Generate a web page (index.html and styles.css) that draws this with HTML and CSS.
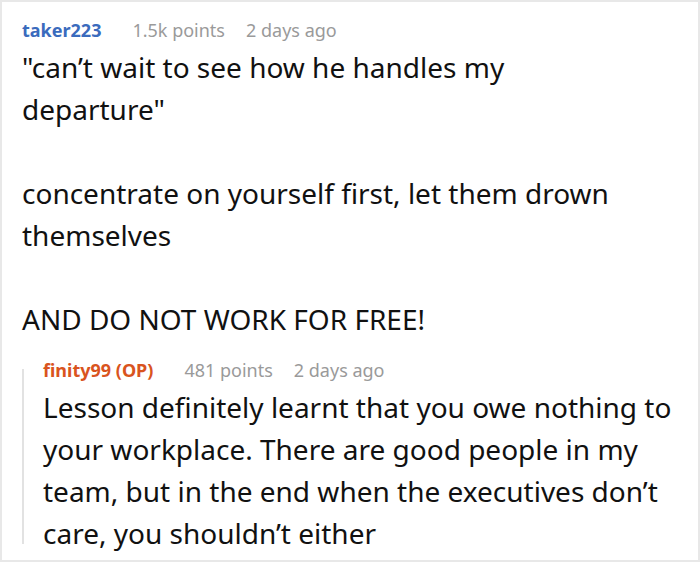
FILE: index.html
```html
<!DOCTYPE html>
<html>
<head>
<meta charset="utf-8">
<link rel="stylesheet" href="styles.css">
</head>
<body>
<div class="frame">
  <div class="comment">
    <div class="meta">
      <span class="user">taker223</span>
      <span class="info">1.5k points</span>
      <span class="info">2 days ago</span>
    </div>
    <div class="body top-body">
      <p>"can’t wait to see how he handles my departure"</p>
      <p>concentrate on yourself first, let them drown themselves</p>
      <p>AND DO NOT WORK FOR FREE!</p>
    </div>
    <div class="reply">
      <div class="thread-line"></div>
      <div class="reply-content">
        <div class="meta">
          <span class="user op">finity99 (OP)</span>
          <span class="info">481 points</span>
          <span class="info">2 days ago</span>
        </div>
        <div class="body reply-body">
          <p>Lesson definitely learnt that you owe nothing to your workplace. There are good people in my team, but in the end when the executives don’t care, you shouldn’t either</p>
        </div>
      </div>
    </div>
  </div>
</div>
</body>
</html>
```

FILE: styles.css
```css
html, body {
  margin: 0;
  padding: 0;
  background: #fff;
}
.frame {
  box-sizing: border-box;
  width: 700px;
  height: 562px;
  border: 2px solid #e8e8e8;
  overflow: hidden;
  font-family: "Noto Sans", "Open Sans", sans-serif;
}
.comment {
  padding: 16px 26px 0 20px;
}
.meta {
  display: flex;
  align-items: baseline;
  font-size: 18px;
  line-height: 24px;
}
.user {
  font-weight: 700;
  color: #3a6bbd;
  margin-right: 31px;
}
.user.op {
  color: #d9541e;
}
.info {
  color: #9a9a9a;
  margin-right: 21px;
}
.body {
  color: #111;
  font-size: 28px;
  line-height: 42px;
}
.body p {
  margin: 0;
}
.top-body {
  margin-top: 4px;
  padding-right: 22px;
}
.top-body p + p {
  margin-top: 42px;
}
.reply {
  display: flex;
  margin-top: 18px;
}
.thread-line {
  width: 2px;
  flex: none;
  background: #e2e2e2;
  margin: 11px 0 10px 0;
}
.reply-content {
  flex: 1;
  padding-left: 19px;
}
.reply-body {
  margin-top: 4px;
}
```
